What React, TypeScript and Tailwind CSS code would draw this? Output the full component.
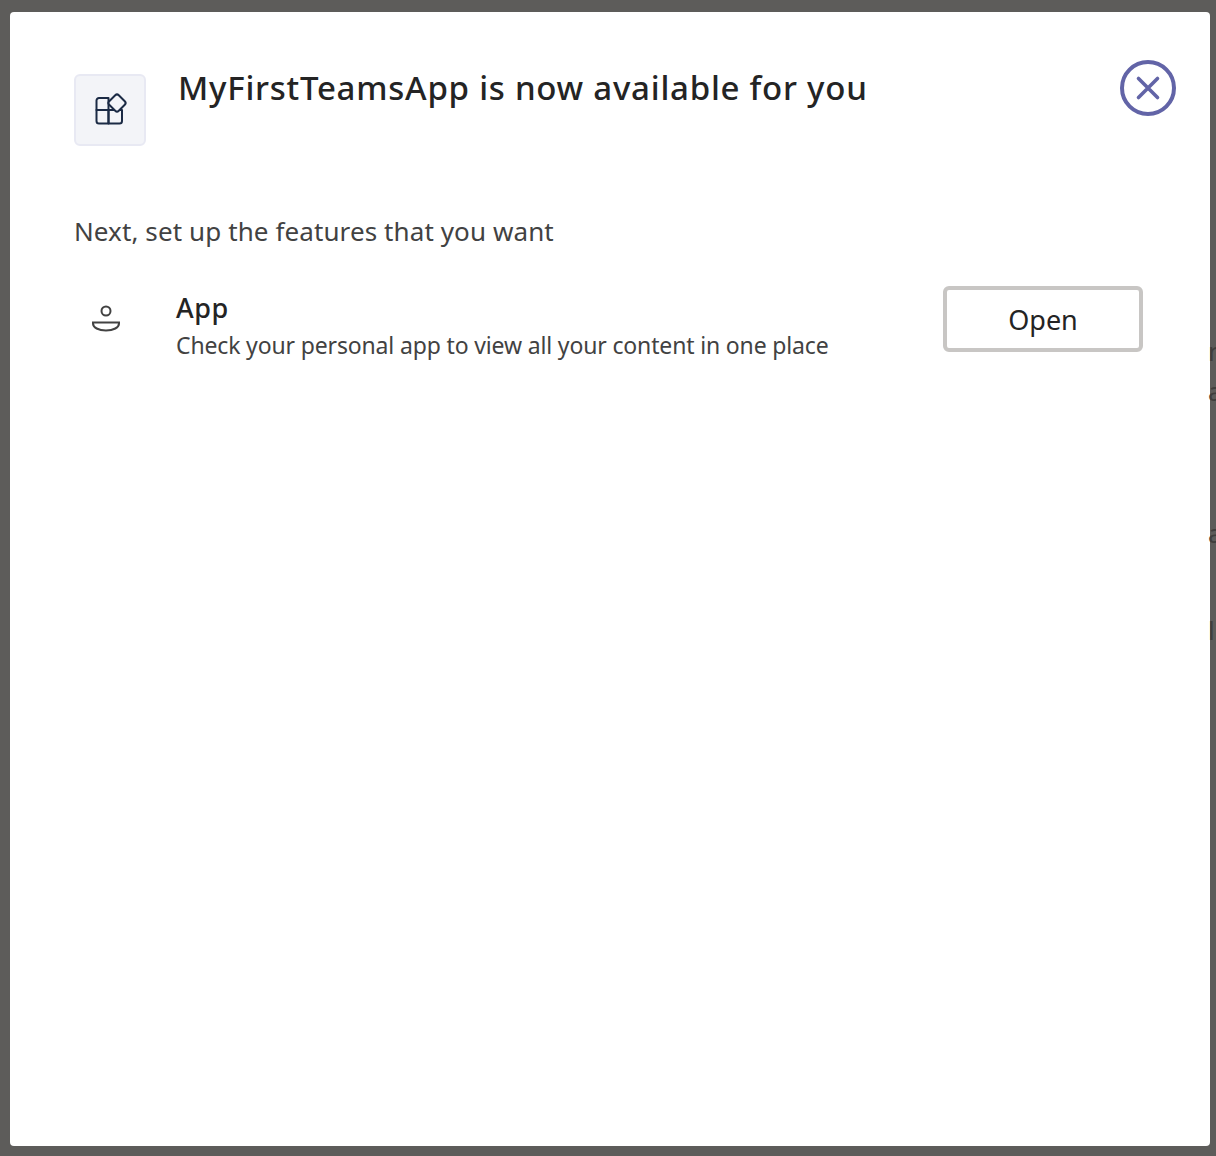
const font = { fontFamily: '"Noto Sans", "Open Sans", sans-serif' };

function AppsIcon() {
  return (
    <svg width="36" height="36" viewBox="0 0 36 36" fill="none" stroke="#1b2a45" strokeWidth="2" strokeLinejoin="round">
      <path d="M4.500 8.500a2.500 2.500 0 0 1 2.500-2.500h9.500v12H4.500z" />
      <path d="M4.500 18h12v13.500H7a2.500 2.500 0 0 1-2.500-2.500z" />
      <path d="M16.500 18H30v11a2.500 2.500 0 0 1-2.500 2.500h-11z" />
      <rect x="18.250" y="4.250" width="13.500" height="13.500" rx="2.500" transform="rotate(45 25 11)" fill="#f3f4f8" />
    </svg>
  );
}

function CloseIcon() {
  return (
    <svg width="56" height="56" viewBox="0 0 56 56" fill="none" stroke="#6264a7">
      <circle cx="28" cy="28" r="26" strokeWidth="4" />
      <path d="M18.500 18.500l19 19M37.500 18.500l-19 19" strokeWidth="3.600" strokeLinecap="round" />
    </svg>
  );
}

function PersonalIcon() {
  return (
    <svg width="32" height="32" viewBox="0 0 32 32" fill="none" stroke="#424242" strokeWidth="2">
      <circle cx="16" cy="11" r="4.500" />
      <path d="M3 22.500h26v1c0 4-5.500 7-13 7s-13-3-13-7z" />
    </svg>
  );
}

export default function App() {
  return (
    <div className="relative h-[1156px] w-full overflow-hidden bg-[#5d5c5a] pt-3 pb-[10px] pl-[10px] pr-[6px]" style={font}>
      <div className="h-full rounded-[4px] bg-white pl-[64px] pr-[34px] pt-[48px]">
        <div className="flex items-start justify-between">
          <div className="flex items-start">
            <div className="mt-[14px] flex h-[72px] w-[72px] items-center justify-center rounded-[6px] border-2 border-[#e8e9f3] bg-[#f3f4f8]">
              <AppsIcon />
            </div>
            <h1 className="ml-[32px] text-[33px] font-medium leading-[56px] tracking-[0.75px] text-[#242424]">MyFirstTeamsApp is now available for you</h1>
          </div>
          <CloseIcon />
        </div>
        <p className="mt-[67px] text-[26px] leading-[36px] tracking-[0.1px] text-[#424242]">Next, set up the features that you want</p>
        <div className="mt-[41px] flex items-start justify-between pr-[33px]">
          <div className="flex items-start">
            <div className="mt-[10px] flex w-[64px] justify-center">
              <PersonalIcon />
            </div>
            <div className="ml-[38px]">
              <div className="text-[27px] font-medium leading-[36px] tracking-[0.5px] text-[#242424]">App</div>
              <div className="text-[23px] leading-[39px] tracking-[-0.15px] text-[#424242]">Check your personal app to view all your content in one place</div>
            </div>
          </div>
          <button className="mt-[-4px] h-[66px] w-[200px] rounded-[6px] border-4 border-[#c8c6c4] bg-white pt-[2px] text-[27px] text-[#242424]">Open</button>
        </div>
      </div>
      <span className="absolute left-[1208px] top-[336px] text-[26px] leading-[30px] text-[#3f3e3d]">n</span>
      <span className="absolute left-[1208px] top-[376px] text-[26px] leading-[30px] text-[#3f3e3d]">a</span>
      <span className="absolute left-[1208px] top-[518px] text-[26px] leading-[30px] text-[#3f3e3d]">a</span>
      <span className="absolute left-[1208px] top-[615px] text-[26px] leading-[30px] text-[#3f3e3d]">l</span>
    </div>
  );
}
